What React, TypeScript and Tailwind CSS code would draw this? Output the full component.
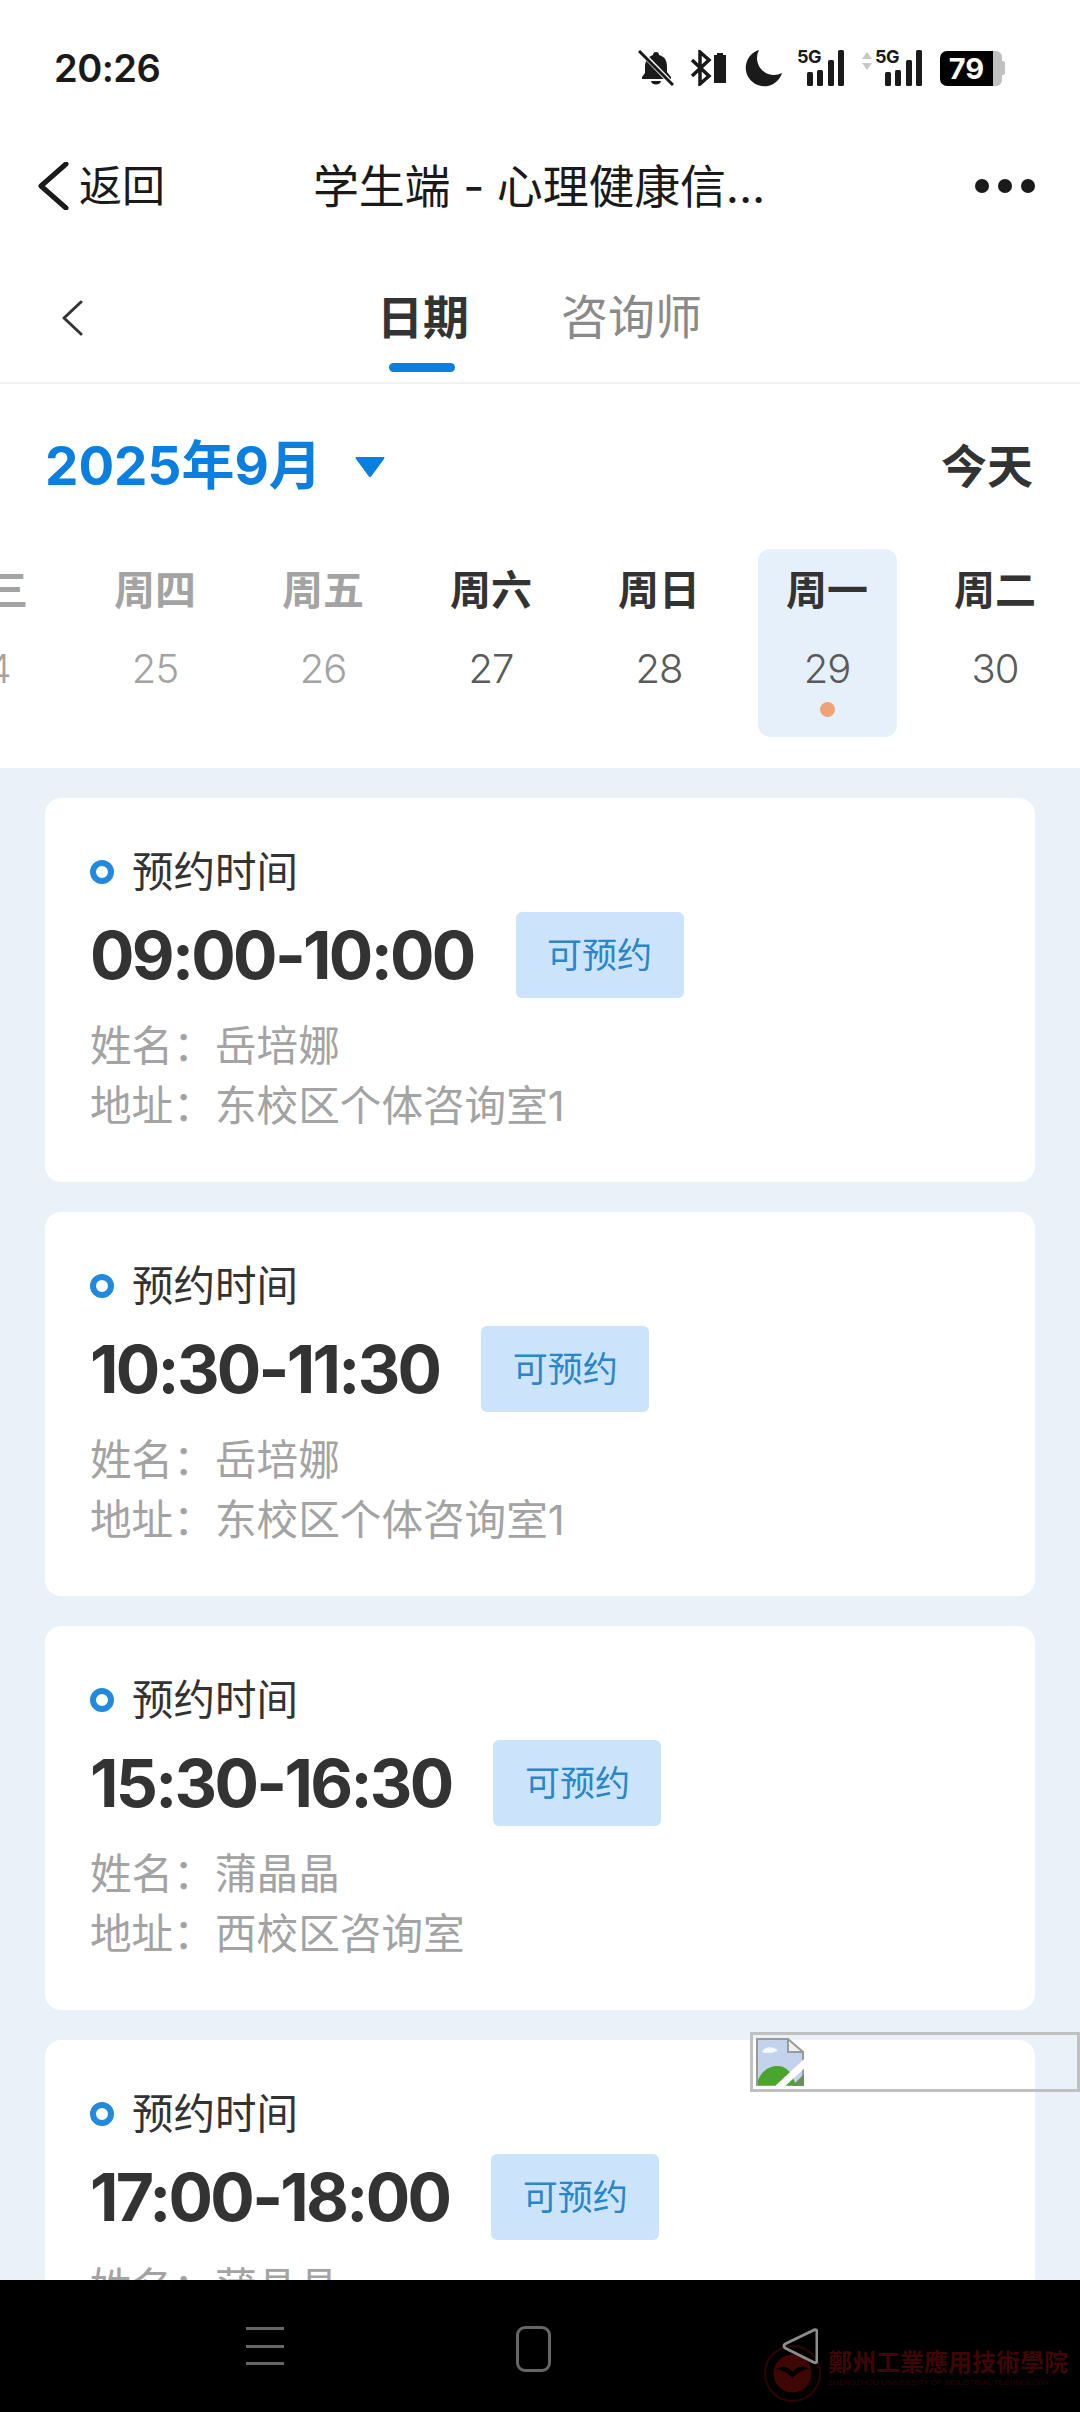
import React from 'react';

const days = [
  { week: '周三', num: '24', past: true },
  { week: '周四', num: '25', past: true },
  { week: '周五', num: '26', past: true },
  { week: '周六', num: '27' },
  { week: '周日', num: '28' },
  { week: '周一', num: '29', active: true },
  { week: '周二', num: '30' },
];

const slots = [
  { time: '09:00-10:00', name: '岳培娜', addr: '东校区个体咨询室1' },
  { time: '10:30-11:30', name: '岳培娜', addr: '东校区个体咨询室1' },
  { time: '15:30-16:30', name: '蒲晶晶', addr: '西校区咨询室' },
  { time: '17:00-18:00', name: '蒲晶晶', addr: '西校区咨询室' },
];

const Signal = ({ arrows }: { arrows?: boolean }) => (
  <div className="relative h-[36px] w-[48px]">
    {arrows && (
      <svg width="10" height="18" viewBox="0 0 10 18" className="absolute left-[-13px] top-[2px]">
        <path d="M5 0 L10 7 H0Z M5 18 L10 11 H0Z" fill="#c8c8c8" />
      </svg>
    )}
    <span className="absolute left-0 top-[-3px] text-[18px] leading-[20px] font-bold tracking-[-0.5px] text-[#1a1a1a]">5G</span>
    <svg width="48" height="36" viewBox="0 0 48 36">
      <rect x="10" y="22" width="6" height="14" rx="1.5" fill="#1a1a1a" />
      <rect x="20" y="20" width="6" height="16" rx="1.5" fill="#1a1a1a" />
      <rect x="31" y="10" width="6" height="26" rx="1.5" fill="#1a1a1a" />
      <rect x="41" y="0" width="6" height="36" rx="1.5" fill="#1a1a1a" />
    </svg>
  </div>
);

const StatusIcons = () => (
  <div className="flex items-center">
    <svg width="36" height="36" viewBox="0 0 36 36">
      <path d="M18 2a3 3 0 0 1 3 3c6 1.500 8 6 8 12v5l4 5v2H4v-2l3-4V17c0-6 3-10.500 8-12a3 3 0 0 1 3-3Z" fill="#1a1a1a" />
      <path d="M13 31h10a5 3.500 0 0 1-10 0Z" fill="#1a1a1a" />
      <path d="M1 0 L36 36" stroke="#fff" strokeWidth="5" />
      <path d="M1 1 L35 35" stroke="#1a1a1a" strokeWidth="3" />
    </svg>
    <svg width="38" height="36" viewBox="0 0 38 36" className="ml-[15px]">
      <path d="M3 10 L20 26 L11 34 V2 L20 10 L3 26" fill="none" stroke="#1a1a1a" strokeWidth="3.500" />
      <path d="M25 5h3V3h6v2h3v28H25Z" fill="#1a1a1a" />
    </svg>
    <svg width="38" height="37" viewBox="0 0 38 37" className="ml-[17px]">
      <path d="M15 0 A18.500 18.500 0 1 0 38 23 A17 17 0 0 1 15 0Z" fill="#1a1a1a" />
    </svg>
    <div className="ml-[15px]">
      <Signal />
    </div>
    <div className="ml-[30px]">
      <Signal arrows />
    </div>
    <div className="relative ml-[17px] flex h-[35px] w-[66px] items-center">
      <div className="flex h-[35px] w-[53px] items-center justify-center rounded-l-[7px] bg-black text-[29px] leading-none font-bold text-white">79</div>
      <div className="h-[35px] w-[9px] rounded-r-[6px] bg-[#c0c0c0]" />
      <div className="h-[14px] w-[3px] rounded-r-[2px] bg-[#c0c0c0]" />
    </div>
  </div>
);

const BrokenImage = () => (
  <svg width="48" height="48" viewBox="0 0 48 48">
    <path d="M0 0 H32 L48 14 V48 H0Z" fill="#c3d3ec" />
    <path d="M0 48 C4 32 14 28 22 28 C30 28 36 34 40 48Z" fill="#4aa52e" />
    <path d="M6 14 C8 8 18 8 22 13 C16 15 10 16 6 14Z" fill="#f4f7fb" />
    <path d="M32 0 V14 H48" fill="#f0f0f0" stroke="#9a9a9a" strokeWidth="2" />
    <path d="M1 48 V1 H32 L47 14 V48Z" fill="none" stroke="#9a9a9a" strokeWidth="2" />
    <path d="M36 48 L48 36 V48Z" fill="#6f8f5a" />
    <path d="M22 50 L50 24" stroke="#fff" strokeWidth="7" />
  </svg>
);

const SlotCard = ({ time, name, addr }: { time: string; name: string; addr: string }) => (
  <div className="h-[384px] shrink-0 rounded-[16px] bg-white pt-[46px] pl-[45px]">
    <div className="flex h-[56px] items-center">
      <span className="h-[24px] w-[24px] rounded-full border-[6px] border-[#2389dc]" />
      <span className="ml-[18px] text-[41.5px] leading-[56px] text-[#333]">预约时间</span>
    </div>
    <div className="mt-[12px] flex h-[86px] items-center">
      <span className="text-[66px] leading-none font-bold tracking-[-2.7px] text-[#333]">{time}</span>
      <span className="ml-[42px] flex h-[86px] w-[168px] items-center justify-center rounded-[6px] bg-[#cce4fb] text-[35px] text-[#2a85c9]">
        可预约
      </span>
    </div>
    <div className="mt-[18px] text-[41.6px] leading-[60px] text-[#a3a3a3]">
      <div className="flex">
        <span className="w-[125px]">姓名：</span>
        <span>{name}</span>
      </div>
      <div className="flex">
        <span className="w-[125px]">地址：</span>
        <span>{addr}</span>
      </div>
    </div>
  </div>
);

export default function App() {
  return (
    <div className="relative flex h-[2412px] w-[1080px] flex-col overflow-hidden bg-white font-['Inter','Noto_Sans_CJK_SC',sans-serif]">
      <div className="flex h-[136px] shrink-0 items-center justify-between pr-[74px] pl-[54px]">
        <span className="text-[38px] font-semibold tracking-[-0.5px] text-[#1a1a1a]">20:26</span>
        <StatusIcons />
      </div>

      <div className="flex h-[100px] shrink-0 items-center pr-[45px] pl-[37px]">
        <svg width="32" height="48" viewBox="0 0 32 48">
          <path d="M29 2 L4 24 L29 46" fill="none" stroke="#1a1a1a" strokeWidth="5" strokeLinecap="round" strokeLinejoin="round" />
        </svg>
        <span className="ml-[10px] text-[43px] text-[#1a1a1a]">返回</span>
        <span className="ml-[148px] flex-1 text-[46px] tracking-[-0.2px] text-[#1a1a1a]">学生端 - 心理健康信...</span>
        <div className="flex gap-[9px]">
          <span className="h-[14px] w-[14px] rounded-full bg-[#1a1a1a]" />
          <span className="h-[14px] w-[14px] rounded-full bg-[#1a1a1a]" />
          <span className="h-[14px] w-[14px] rounded-full bg-[#1a1a1a]" />
        </div>
      </div>

      <div className="flex h-[148px] shrink-0 border-b-2 border-[#f1f1f1] pl-[61px]">
        <svg width="22" height="36" viewBox="0 0 22 36" className="mt-[64px]">
          <path d="M20 2 L3 18 L20 34" fill="none" stroke="#333" strokeWidth="3" strokeLinecap="round" strokeLinejoin="round" />
        </svg>
        <div className="ml-[294px] flex flex-col items-start pt-[51px]">
          <span className="text-[46px] leading-[60px] font-bold text-[#333]">日期</span>
          <span className="mt-[16px] ml-[12px] h-[9px] w-[66px] rounded-full bg-[#0a7fe0]" />
        </div>
        <div className="ml-[92px] pt-[51px]">
          <span className="text-[47px] leading-[60px] text-[#8a8a8a]">咨询师</span>
        </div>
      </div>

      <div className="flex h-[165px] shrink-0 items-center justify-between pr-[47px] pl-[45px]">
        <div className="flex items-center">
          <span className="text-[53px] font-bold text-[#0a7fe0]">2025年9月</span>
          <svg width="32" height="22" viewBox="0 0 32 22" className="ml-[32px]">
            <path d="M2 1 H30 Q31 1 30 3 L17.500 20 Q16 22 14.500 20 L2 3 Q1 1 2 1Z" fill="#0a7fe0" />
          </svg>
        </div>
        <span className="text-[46px] font-bold text-[#333]">今天</span>
      </div>

      <div className="ml-[-97px] flex shrink-0 pb-[31px]">
        {days.map((d) => (
          <div key={d.num} className="w-[168px] shrink-0">
            <div
              className={`mx-auto flex h-[188px] w-[139px] flex-col items-center rounded-[12px] pt-[16px] ${d.active ? 'bg-[#e6f0fb]' : ''}`}
            >
              <span className={`text-[41px] leading-[50px] font-bold whitespace-nowrap ${d.past ? 'text-[#a3a3a3]' : 'text-[#333]'}`}>
                {d.week}
              </span>
              <span className={`mt-[30px] text-[40px] leading-[48px] font-light tracking-[-1px] ${d.past ? 'text-[#a3a3a3]' : 'text-[#5a5a5a]'}`}>
                {d.num}
              </span>
              {d.active && <span className="mt-[9px] h-[15px] w-[15px] rounded-full bg-[#eda277]" />}
            </div>
          </div>
        ))}
      </div>

      <div className="flex min-h-0 flex-1 flex-col gap-[30px] overflow-hidden bg-[#ebf1f9] px-[45px] pt-[30px]">
        {slots.map((s) => (
          <SlotCard key={s.time} {...s} />
        ))}
      </div>

      <div className="flex h-[132px] shrink-0 bg-black">
        <div className="mt-[47px] ml-[246px] flex h-[38px] w-[38px] flex-col justify-between">
          <span className="h-[3px] w-full bg-[#666]" />
          <span className="h-[3px] w-full bg-[#666]" />
          <span className="h-[3px] w-full bg-[#666]" />
        </div>
        <span className="mt-[46px] ml-[232px] h-[46px] w-[35px] rounded-[9px] border-[3px] border-[#666]" />
        <div className="relative mt-[65px] ml-[212px] h-[57px] w-[59px]">
          <svg width="59" height="57" viewBox="0 0 59 57">
            <circle cx="29.500" cy="28.500" r="27.500" fill="none" stroke="#2e0505" strokeWidth="2" />
            <circle cx="29.500" cy="28.500" r="19" fill="#3f0606" />
            <path d="M13 24 C20 20 26 22 29.500 27 C33 22 39 20 46 24 C39 25 34 28 29.500 33 C25 28 20 25 13 24Z" fill="#000" />
          </svg>
          <svg width="36" height="37" viewBox="0 0 36 37" className="absolute top-[-17px] left-[19px]">
            <path d="M32 2 Q35 1 35 4 V32 Q35 36 31 34 L3 20 Q1 18 3 16Z" fill="none" stroke="#8c8c8c" strokeWidth="3" strokeLinejoin="round" />
          </svg>
        </div>
        <div className="ml-[6px] pt-[69px] font-['Liberation_Serif','Noto_Sans_CJK_TC',serif] text-[#3f0606]">
          <div className="text-[24px] leading-[28px] font-bold whitespace-nowrap">鄭州工業應用技術學院</div>
          <div className="font-['Liberation_Sans',sans-serif] text-[8px] leading-[12px] whitespace-nowrap text-[#2e0505]">
            ZHENGZHOU UNIVERSITY OF INDUSTRIAL TECHNOLOGY
          </div>
        </div>
      </div>

      <div className="absolute top-[2032px] left-[750px] h-[60px] w-[330px] border-[3px] border-[#c0c0c0] pt-[3px] pl-[3px]">
        <BrokenImage />
      </div>
    </div>
  );
}
